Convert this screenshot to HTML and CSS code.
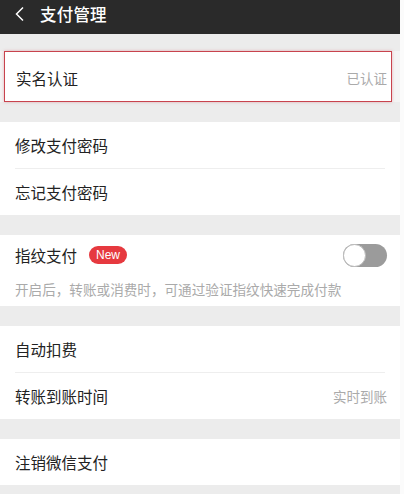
FILE: index.html
```html
<!DOCTYPE html>
<html lang="zh-CN">
<head>
<meta charset="utf-8">
<link rel="stylesheet" href="styles.css">
</head>
<body>
<div class="app">
  <header class="topbar">
    <svg class="back" width="12" height="16" viewBox="0 0 12 16"><polyline points="9,1.5 2.5,8 9,14.5" fill="none" stroke="#fff" stroke-width="1.5"/></svg>
    <span class="title">支付管理</span>
  </header>

  <section class="group first">
    <div class="row highlighted">
      <span class="label">实名认证</span>
      <span class="value">已认证</span>
    </div>
  </section>

  <section class="group">
    <div class="row"><span class="label">修改支付密码</span></div>
    <div class="sep"></div>
    <div class="row"><span class="label">忘记支付密码</span></div>
  </section>

  <section class="group">
    <div class="row finger">
      <span class="label">指纹支付</span>
      <span class="badge">New</span>
      <span class="toggle"><span class="knob"></span></span>
    </div>
    <div class="desc">开启后，转账或消费时，可通过验证指纹快速完成付款</div>
  </section>

  <section class="group">
    <div class="row"><span class="label">自动扣费</span></div>
    <div class="sep"></div>
    <div class="row"><span class="label">转账到账时间</span><span class="value">实时到账</span></div>
  </section>

  <section class="group">
    <div class="row"><span class="label">注销微信支付</span></div>
  </section>
</div>
</body>
</html>
```

FILE: styles.css
```css
html, body {
  margin: 0;
  padding: 0;
  background: #fbfbfb;
}
body {
  font-family: "Noto Sans CJK SC", "Noto Sans", sans-serif;
  color: #222;
}
.app {
  width: 400px;
  height: 494px;
  background: #ececec;
  display: flex;
  flex-direction: column;
  overflow: hidden;
}
.topbar {
  height: 34px;
  background: #2a2a2a;
  display: flex;
  align-items: center;
  padding-left: 14px;
  padding-bottom: 6px;
  box-sizing: border-box;
  color: #fff;
}
.back {
  margin-right: 14px;
}
.title {
  font-size: 16.5px;
  font-weight: 500;
  letter-spacing: 0.2px;
}
.group {
  background: #fff;
  margin-top: 20px;
  display: flex;
  flex-direction: column;
}
.group.first {
  margin-top: 17px;
  background: #f4f4f4;
}
.row {
  height: 46px;
  display: flex;
  align-items: center;
  padding: 0 13px 0 15px;
  background: #fff;
}
.row.highlighted {
  height: 51px;
  margin: 0 8px 0 4px;
  padding: 2px 4px 0 11px;
  box-sizing: border-box;
  border: 1.5px solid #c8434d;
  box-shadow: 0 0 3px rgba(200, 67, 77, 0.35);
}
.label {
  font-size: 15.5px;
  color: #222;
}
.value {
  margin-left: auto;
  font-size: 13.5px;
  color: #aaa;
}
.sep {
  height: 1px;
  background: #eeeeee;
  margin: 0 15px 0 15px;
}
.finger {
  height: 40px;
}
.badge {
  margin-left: 12px;
  background: #e6393f;
  color: #fff;
  font-family: "Liberation Sans", Arial, sans-serif;
  font-size: 12px;
  height: 18px;
  line-height: 18px;
  padding: 0 7px;
  border-radius: 9px;
}
.toggle {
  margin-left: auto;
  width: 44px;
  height: 23px;
  border-radius: 12px;
  background: #9b9b9b;
  position: relative;
}
.knob {
  position: absolute;
  left: 0;
  top: 0;
  width: 21px;
  height: 21px;
  border-radius: 50%;
  background: #fff;
  border: 1px solid #bbb;
}
.desc {
  height: 31px;
  padding: 0 15px;
  font-size: 13.6px;
  color: #aaa;
  line-height: 28px;
}
```
